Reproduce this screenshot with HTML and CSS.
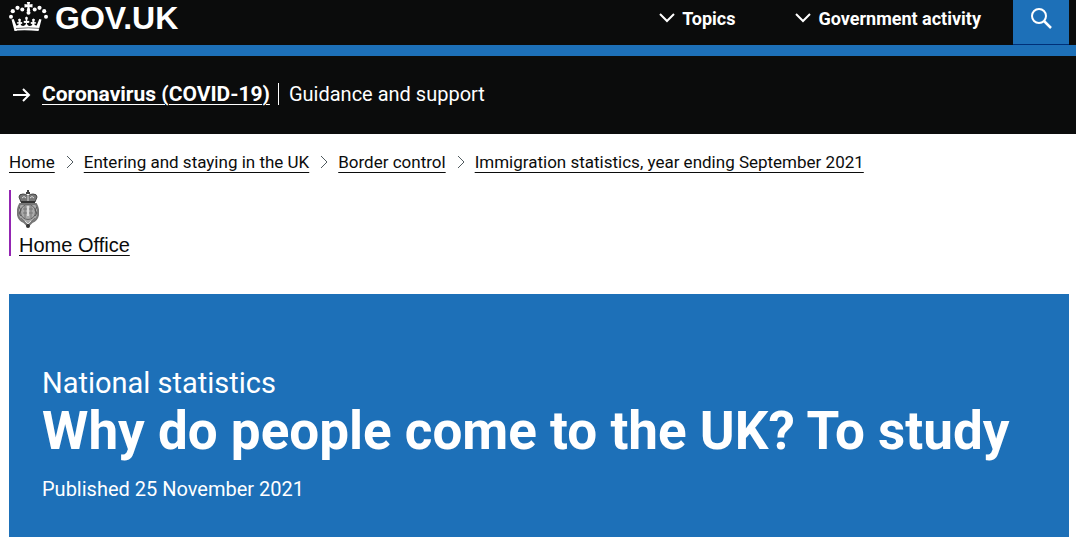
FILE: index.html
```html
<!DOCTYPE html>
<html lang="en">
<head>
<meta charset="utf-8">
<meta name="viewport" content="width=device-width, initial-scale=1">
<title>Why do people come to the UK? To study - GOV.UK</title>
<link rel="stylesheet" href="styles.css">
</head>
<body>
<header class="header">
  <a class="logo" href="#">
    <svg class="crown" viewBox="0 0 40 32" aria-hidden="true">
      <g fill="#fff">
        <path d="M19.500 4.500L18.800 2h3.400l-.700 2.500L24.500 4v3.600l-3-.600.800 4h-3.600l.800-4-3 .600V4z"/>
        <circle cx="3" cy="16.700" r="2"/><circle cx="4.800" cy="11.200" r="2.100"/><circle cx="9.500" cy="7.800" r="2.100"/><circle cx="14.300" cy="9.500" r="2"/>
        <circle cx="38" cy="16.700" r="2"/><circle cx="36.200" cy="11.200" r="2.100"/><circle cx="31.500" cy="7.800" r="2.100"/><circle cx="26.700" cy="9.500" r="2"/>
        <circle cx="20.500" cy="12.700" r="2"/>
        <path d="M6.500 31L3.500 19.500l2.200-.5 2.600 6.500q2 .3 2.700-2-1.600.6-2.300-.5.7-1.400 2.200-.8l-.9-2.700 1.500-1 1.500 1-.5 2.700q1.600-.5 2 .8-.6 1.300-2.100.7.600 2.400 2.900 2.300 2.600-.3 2.900-3.200-2 .8-2.800-.8.700-1.700 2.600-1l-1-3.300 1.500-1.300 1.500 1.300-1 3.300q1.900-.7 2.600 1-.8 1.600-2.800.8.300 2.900 2.900 3.200 2.300.1 2.900-2.300-1.500.6-2.100-.7.400-1.300 2-.8l-.5-2.700 1.500-1 1.500 1-.9 2.700q1.500-.6 2.200.8-.7 1.100-2.300.5.700 2.300 2.700 2l2.600-6.500 2.200.5-3 11.500q-14-1.500-28 0z"/>
      </g>
      <path d="M8 28.500q12.500-1.300 25 0" fill="none" stroke="#0b0c0c" stroke-width=".6"/>
    </svg>
    <span>GOV.UK</span>
  </a>
  <nav class="menu" aria-label="Main menu">
    <button class="menu-button" type="button">
      <svg class="chevron" viewBox="0 0 16 10" aria-hidden="true"><path d="M1 1l7 7 7-7" fill="none" stroke="#fff" stroke-width="2"/></svg>
      Topics
    </button>
    <button class="menu-button" type="button">
      <svg class="chevron" viewBox="0 0 16 10" aria-hidden="true"><path d="M1 1l7 7 7-7" fill="none" stroke="#fff" stroke-width="2"/></svg>
      Government activity
    </button>
    <button class="search" type="button" aria-label="Search GOV.UK">
      <svg class="search-icon" viewBox="0 0 22 22" aria-hidden="true"><g fill="none" stroke="#fff" stroke-width="2"><circle cx="9" cy="9" r="7"/><path d="M14 14l7 7" stroke-width="2.500"/></g></svg>
    </button>
  </nav>
</header>
<section class="banner" aria-label="Coronavirus">
  <svg class="arrow" viewBox="0 0 18 16" aria-hidden="true"><path d="M0 9h16M10 3l6 6-6 6" fill="none" stroke="#fff" stroke-width="2"/></svg>
  <a class="banner-link" href="#">Coronavirus (COVID-19)</a>
  <span class="banner-text">Guidance and support</span>
</section>
<main class="page">
  <nav aria-label="Breadcrumb">
    <ol class="crumbs">
      <li><a href="#">Home</a></li>
      <li><svg viewBox="0 0 8 14" aria-hidden="true"><path d="M1 1l6 6-6 6"/></svg><a href="#">Entering and staying in the UK</a></li>
      <li><svg viewBox="0 0 8 14" aria-hidden="true"><path d="M1 1l6 6-6 6"/></svg><a href="#">Border control</a></li>
      <li><svg viewBox="0 0 8 14" aria-hidden="true"><path d="M1 1l6 6-6 6"/></svg><a href="#">Immigration statistics, year ending September 2021</a></li>
    </ol>
  </nav>
  <div class="office">
    <svg class="crest" viewBox="0 0 22 38" aria-hidden="true">
      <path d="M10 0h2v2h1v2H9V2h1z" fill="#444"/>
      <path d="M4 12L2 7q0-3 4-3 3 0 5 2 2-2 5-2 4 0 4 3l-2 5z" fill="#777" stroke="#444"/>
      <path d="M5 8q2-3 4 0M13 8q2-3 4 0M11 5v6" fill="none" stroke="#ddd"/>
      <path d="M4 12h14" stroke="#333" stroke-width="2"/>
      <path d="M3 14q-3 5-2 11 1 5 6 7l4 4 4-4q5-2 6-7 1-6-2-11z" fill="#aaa" stroke="#777" stroke-width="2"/>
      <circle cx="11" cy="22" r="7.500" fill="#aaa" stroke="#666"/>
      <path d="M6 19h10M6 23h10M8 16v12M14 16v12M4 28l4 4M18 28l-4 4" fill="none" stroke="#777"/>
      <path d="M11 16v10" stroke="#ddd" stroke-width="2"/>
      <path d="M2 17l2 3-2 3 2 3M20 17l-2 3 2 3-2 3" fill="none" stroke="#555"/>
      <path d="M8 31l3 3 3-3" fill="none" stroke="#ddd"/><circle cx="11" cy="36" r="2" fill="#333"/>
    </svg>
    <a href="#">Home Office</a>
  </div>
  <div class="hero">
    <p class="kicker">National statistics</p>
    <h1>Why do people come to the UK? To study</h1>
    <p class="published">Published 25 November 2021</p>
  </div>
</main>
</body>
</html>
```
FILE: styles.css
```css
* { box-sizing: border-box; }
body {
  margin: 0;
  background: #fff;
  color: #0b0c0c;
  font-family: Roboto, "Liberation Sans", sans-serif;
}
a { color: inherit; }
svg { display: block; flex: none; }
button { border: 0; background: none; color: #fff; font: inherit; cursor: pointer; }
.header {
  display: flex;
  justify-content: space-between;
  height: 56px;
  padding: 0 7px 0 8px;
  background: #0b0c0c;
  border-bottom: 11px solid #1d70b8;
}
.logo {
  display: flex;
  gap: 7px;
  color: #fff;
  font: bold 32px/36px "Liberation Sans", sans-serif;
  text-decoration: none;
}
.crown { width: 40px; height: 32px; }
.menu { display: flex; }
.menu-button {
  display: flex;
  align-items: center;
  gap: 7px;
  height: 36px;
  padding: 0;
  margin-right: 60px;
  font-size: 18px;
  font-weight: 700;
}
.menu-button:nth-child(2) { margin-right: 32px; }
.chevron { width: 16px; height: 10px; }
.search {
  display: flex;
  justify-content: center;
  width: 56px;
  height: 45px;
  padding: 7px 0 0;
  background: #1d70b8;
  border-bottom: 1px solid #003078;
}
.search-icon { width: 22px; height: 22px; }
.banner {
  display: flex;
  align-items: center;
  height: 78px;
  padding: 0 13px 2px;
  background: #0b0c0c;
  color: #fff;
  font-size: 20px;
  line-height: 24px;
}
.arrow { width: 18px; height: 16px; margin-right: 11px; }
.banner-link {
  font-size: 21px;
  font-weight: 700;
  text-underline-offset: 3px;
  text-decoration-thickness: 1px;
}
.banner-text {
  margin-left: 8px;
  padding-left: 10px;
  border-left: 1px solid #fff;
  line-height: 22px;
}
.page { padding: 16px 7px 9px 9px; }
.crumbs {
  display: flex;
  flex-wrap: wrap;
  gap: 11px;
  margin: 0;
  padding: 0;
  list-style: none;
  font-size: 17px;
  line-height: 24px;
}
.crumbs li { display: flex; align-items: center; gap: 10px; }
.crumbs svg { width: 8px; height: 14px; fill: none; stroke: #505a5f; }
.crumbs a { text-decoration-thickness: 1px; text-underline-offset: 4px; }
.office {
  margin: 16px 0 38px;
  padding-left: 6px;
  border-left: 2px solid #9325b2;
  font: 20px/22px "Liberation Sans", sans-serif;
}
.crest { width: 22px; height: 38px; margin-bottom: 6px; }
.office a {
  margin-left: 2px;
  text-decoration-thickness: 1px;
  text-underline-offset: 3px;
}
.hero { padding: 71px 33px 34px; background: #1d70b8; color: #fff; }
.kicker { margin: 0; font-size: 29px; line-height: 36px; }
h1 { margin: 0 0 14px; font-size: 53px; line-height: 60px; font-weight: 700; }
.published { margin: 0; font-size: 20px; line-height: 28px; }
```
